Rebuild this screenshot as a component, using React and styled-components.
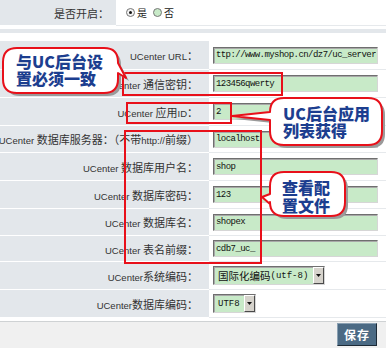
import React from "react";
import styled, { createGlobalStyle } from "styled-components";

const GlobalStyle = createGlobalStyle`
  html, body { margin: 0; padding: 0; background: #fff; }
  body { font-family: "Liberation Sans", "Noto Sans CJK SC", sans-serif; overflow: hidden; }
`;

const Page = styled.div`
  position: relative;
  width: 386px;
  height: 348px;
  overflow: hidden;
  background: #fff;
  display: flex;
  flex-direction: column;
`;

const TopRow = styled.div`
  display: grid;
  grid-template-columns: 116px 1fr;
  height: 26px;
`;

const FormRow = styled.div`
  display: grid;
  grid-template-columns: 209px 1fr;
  height: ${(p) => p.$h}px;
`;

const LabelCell = styled.div`
  box-sizing: border-box;
  background: #e3e7eb;
  color: #333;
  display: flex;
  align-items: center;
  justify-content: flex-end;
  padding-right: ${(p) => p.$pad}px;
  white-space: nowrap;
  font-size: 9.5px;
  border-bottom: 1px solid #fff;
`;

const LabelText = styled.span`
  white-space: pre;
`;

const Cjk = styled.span`
  font-family: "Noto Sans CJK SC", sans-serif;
  font-size: ${(p) => p.$size || 11}px;
`;

const ValueCell = styled.div`
  box-sizing: border-box;
  background: #fff;
  border-bottom: 1px solid #e6e9ec;
  display: flex;
  align-items: center;
  padding-left: ${(p) => p.$pad}px;
`;

const Divider = styled.div`
  height: 4px;
  background: #e3e7eb;
  margin: 3px 0 8px;
`;

const RadioGroup = styled.div`
  display: flex;
  align-items: center;
  color: #222;
`;

const Radio = styled.span`
  box-sizing: border-box;
  width: 9px;
  height: 9px;
  border-radius: 50%;
  border: 1px solid #777;
  background: ${(p) => (p.$checked ? "#f2f2f2" : "#c8eac8")};
  display: inline-flex;
  align-items: center;
  justify-content: center;
  margin-right: 2px;
  &::after {
    content: "";
    width: 3px;
    height: 3px;
    border-radius: 50%;
    background: ${(p) => (p.$checked ? "#111" : "transparent")};
  }
`;

const RadioText = styled.span`
  font-family: "Noto Sans CJK SC", sans-serif;
  font-size: 10px;
  margin-right: 6px;
`;

const TextInput = styled.input`
  box-sizing: border-box;
  width: 165px;
  height: 17px;
  margin: 0;
  padding: 0 1px 0 2px;
  background: #c8eac8;
  border: 1px solid;
  border-color: #6f6f6f #d6d6d6 #d6d6d6 #6f6f6f;
  box-shadow: inset 1px 1px 0 #a8a8a8;
  font-family: "Liberation Mono", monospace;
  font-size: 9px;
  letter-spacing: -0.55px;
  color: #111;
  outline: none;
  direction: ${(p) => (p.$end ? "rtl" : "ltr")};
  text-align: left;
`;

const SelectBox = styled.div`
  box-sizing: border-box;
  width: ${(p) => p.$w}px;
  height: 19px;
  display: flex;
  align-items: stretch;
  background: #c8eac8;
  border: 1px solid;
  border-color: #6f6f6f #d6d6d6 #d6d6d6 #6f6f6f;
  box-shadow: inset 1px 1px 0 #a8a8a8;
`;

const SelectText = styled.span`
  flex: 1;
  display: flex;
  align-items: center;
  padding-left: 4px;
  font-family: "Liberation Mono", "Noto Sans CJK SC", monospace;
  font-size: 9px;
  color: #111;
  white-space: nowrap;
  overflow: hidden;
`;

const SelectArrow = styled.span`
  box-sizing: border-box;
  width: 11px;
  background: #d6d3cc;
  border: 1px solid;
  border-color: #fff #4a4a4a #4a4a4a #fff;
  display: flex;
  align-items: center;
  justify-content: center;
`;

const Footer = styled.div`
  flex: 1;
  margin-top: 3px;
  border-top: 1px solid #cfd2d4;
  background: #f0f0f0;
  display: flex;
  justify-content: flex-end;
  align-items: flex-start;
  padding: 1px 9px 0 0;
`;

const SaveButton = styled.button`
  box-sizing: border-box;
  width: 40px;
  height: 23px;
  padding: 0;
  background: #4b6a84;
  color: #fff;
  border: 1px solid;
  border-color: #8aa0b2 #1c2a36 #1c2a36 #8aa0b2;
  font-family: "Noto Sans CJK SC", sans-serif;
  font-weight: 700;
  font-size: 12px;
  letter-spacing: 1px;
`;

const Overlay = styled.svg`
  position: absolute;
  left: 0;
  top: 0;
  pointer-events: none;
`;

const BubbleText = styled.div`
  position: absolute;
  left: ${(p) => p.$x}px;
  top: ${(p) => p.$y}px;
  font-family: "Noto Sans CJK SC", sans-serif;
  font-weight: 900;
  font-size: 16px;
  line-height: ${(p) => p.$lh}px;
  color: #1c3e8f;
  white-space: pre;
`;

const CJK_RE = /([\u3000-\u303f\u4e00-\u9fff\uff00-\uffef]+)/;

function Mixed({ text, size }) {
  return (
    <LabelText>
      {text.split(CJK_RE).map((part, i) =>
        i % 2 === 1 ? (
          <Cjk key={i} $size={size}>{part}</Cjk>
        ) : (
          part
        )
      )}
    </LabelText>
  );
}

function Select({ w, children }) {
  return (
    <SelectBox $w={w}>
      <SelectText>{children}</SelectText>
      <SelectArrow>
        <svg width="5" height="3" viewBox="0 0 5 3">
          <path d="M0 0h5L2.5 3z" fill="#111" />
        </svg>
      </SelectArrow>
    </SelectBox>
  );
}

const rows = [
  { label: "UCenter URL：", h: 29, value: <TextInput $end readOnly value="http://www.myshop.cn/dz7/uc_server" /> },
  { label: "UCenter 通信密钥：", h: 28, value: <TextInput readOnly value="123456qwerty" /> },
  { label: "UCenter 应用ID：", h: 28, value: <TextInput readOnly value="2" /> },
  { label: "UCenter 数据库服务器：（不带http://前缀）", h: 27, value: <TextInput readOnly value="localhost" /> },
  { label: "UCenter 数据库用户名：", h: 28, value: <TextInput readOnly value="shop" /> },
  { label: "UCenter 数据库密码：", h: 28, value: <TextInput readOnly value="123" /> },
  { label: "UCenter 数据库名：", h: 27, value: <TextInput readOnly value="shopex" /> },
  { label: "UCenter 表名前缀：", h: 26, value: <TextInput readOnly value="cdb7_uc_" /> },
  {
    label: "UCenter系统编码：",
    h: 28,
    value: (
      <Select w={112}>
        <Cjk $size={10.5}>国际化编码</Cjk>(utf-8)
      </Select>
    ),
  },
  { label: "UCenter数据库编码：", h: 28, value: <Select w={43}>UTF8</Select> },
];

function bubbleRight(x1, y1, x2, y2, r, b1, b2, tx, ty) {
  return `M${x1 + r} ${y1} H${x2 - r} Q${x2} ${y1} ${x2} ${y1 + r} V${b1} L${tx} ${ty} L${x2} ${b2} V${y2 - r} Q${x2} ${y2} ${x2 - r} ${y2} H${x1 + r} Q${x1} ${y2} ${x1} ${y2 - r} V${y1 + r} Q${x1} ${y1} ${x1 + r} ${y1} Z`;
}

function bubbleLeft(x1, y1, x2, y2, r, b1, b2, tx, ty) {
  return `M${x1 + r} ${y1} H${x2 - r} Q${x2} ${y1} ${x2} ${y1 + r} V${y2 - r} Q${x2} ${y2} ${x2 - r} ${y2} H${x1 + r} Q${x1} ${y2} ${x1} ${y2 - r} V${b2} L${tx} ${ty} L${x1} ${b1} V${y1 + r} Q${x1} ${y1} ${x1 + r} ${y1} Z`;
}

const RED = "#e8101a";

const bubbles = [
  bubbleRight(3, 48, 118, 93, 14, 63, 73, 126, 78),
  bubbleLeft(270, 98, 382, 145, 14, 112, 120, 232, 116),
  bubbleLeft(270, 172, 345, 216, 14, 194, 204, 262, 197),
];

export default function App() {
  return (
    <>
      <GlobalStyle />
      <Page>
        <TopRow>
          <LabelCell $pad={7}>
            <Mixed text="是否开启：" size={11} />
          </LabelCell>
          <ValueCell $pad={10}>
            <RadioGroup>
              <Radio $checked />
              <RadioText>是</RadioText>
              <Radio />
              <RadioText>否</RadioText>
            </RadioGroup>
          </ValueCell>
        </TopRow>
        <Divider />
        {rows.map((r, i) => (
          <FormRow key={i} $h={r.h}>
            <LabelCell $pad={11}>
              <Mixed text={r.label} size={11} />
            </LabelCell>
            <ValueCell $pad={4}>{r.value}</ValueCell>
          </FormRow>
        ))}
        <Footer>
          <SaveButton>保存</SaveButton>
        </Footer>

        <Overlay width="386" height="348" viewBox="0 0 386 348">
          <rect x="123" y="73" width="159" height="22" fill="none" stroke={RED} strokeWidth="2" />
          <rect x="127" y="103" width="104" height="20" fill="none" stroke={RED} strokeWidth="2" />
          <rect x="125" y="131" width="136" height="132" fill="none" stroke={RED} strokeWidth="2" />
          {bubbles.map((d, i) => (
            <g key={i}>
              <path d={d} transform="translate(3 3)" fill="#9a9a9a" />
              <path d={d} fill="#fff" stroke={RED} strokeWidth="2" strokeLinejoin="round" />
            </g>
          ))}
        </Overlay>
        <BubbleText $x={16} $y={53} $lh={17}>{"与UC后台设\n置必须一致"}</BubbleText>
        <BubbleText $x={283} $y={105} $lh={17}>{"UC后台应用\n列表获得"}</BubbleText>
        <BubbleText $x={282} $y={178} $lh={18}>{"查看配\n置文件"}</BubbleText>
      </Page>
    </>
  );
}
